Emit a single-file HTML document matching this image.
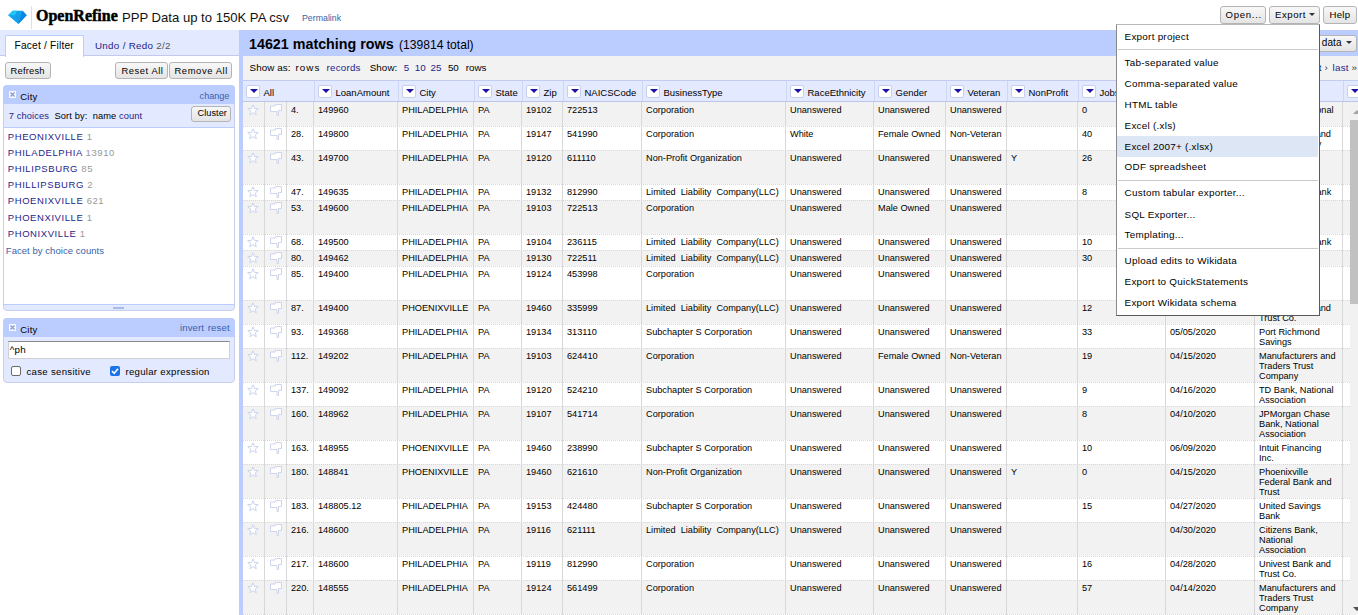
<!DOCTYPE html>
<html><head><meta charset="utf-8"><title>OpenRefine</title>
<style>
*{box-sizing:border-box;margin:0;padding:0}
html,body{width:1358px;height:615px;overflow:hidden;background:#fff;font-family:"Liberation Sans",sans-serif;color:#000;position:relative}
.a{-webkit-text-stroke:0px currentColor}
.a{position:absolute;white-space:nowrap}
.btn{position:absolute;border:1px solid #b4b4b4;border-radius:3px;background:linear-gradient(#f8f8f8,#e4e4e4)}
.vl{position:absolute;width:1px;background:#d8d8d8}
.dd{position:absolute;width:14px;height:13px;background:#fff;border:1px solid #c8cfee;border-radius:2px}
.dd:after{content:"";position:absolute;left:2.5px;top:3px;border-left:4px solid transparent;border-right:4px solid transparent;border-top:4.5px solid #1c12a0}
.arr{position:absolute;border-left:3px solid transparent;border-right:3px solid transparent;border-top:3.5px solid #333}
</style></head><body>

<svg class="a" style="left:8px;top:10px" width="20" height="15" viewBox="0 0 20 15">
<polygon points="4.6,0.8 14.6,0.8 18.7,5.3 10.3,13.9 0.1,5.3" fill="#12a2ee"/>
<polygon points="4.6,0.8 9,0.8 7,5.3 0.1,5.3" fill="#22c6f6"/>
<polygon points="14.6,0.8 18.7,5.3 10.3,13.9 13,5.3" fill="#0b86e2"/>
<polygon points="7,5.3 13,5.3 10.3,13.9" fill="#139cec"/>
</svg>
<div class="a" style="left:31px;top:6px;width:1px;height:23px;background:#dcdcea"></div>
<div class="a" style="left:36px;top:5.10px;font-size:16px;line-height:21px;font-family:'Liberation Serif',serif;font-weight:bold;letter-spacing:0px;-webkit-text-stroke:0.45px #000">OpenRefine</div>
<div class="a" style="left:122px;top:8.96px;font-size:13.1px;line-height:17px;color:#111">PPP Data up to 150K PA csv</div>
<div class="a" style="left:302px;top:12.95px;font-size:8.8px;line-height:11px;color:#3a5fa8">Permalink</div>
<div class="btn" style="left:1220px;top:6px;width:46px;height:18px"></div>
<div class="a" style="left:1225.5px;top:8.67px;font-size:9.6px;line-height:12px;letter-spacing:0.7px">Open...</div>
<div class="btn" style="left:1269px;top:6px;width:51px;height:18px"></div>
<div class="a" style="left:1275px;top:8.67px;font-size:9.6px;line-height:12px;letter-spacing:0.55px">Export</div>
<div class="arr" style="left:1309px;top:13px"></div>
<div class="btn" style="left:1323px;top:6px;width:34px;height:18px"></div>
<div class="a" style="left:1329.5px;top:8.67px;font-size:9.6px;line-height:12px;letter-spacing:0.3px">Help</div>
<div class="a" style="left:0;top:30px;width:239px;height:26px;background:#e3e9ff;border-bottom:1px solid #c3c9ea"></div>
<div class="a" style="left:5px;top:35px;width:79px;height:22px;background:#fff;border:1px solid #bbccff;border-bottom:none;border-radius:2px 2px 0 0"></div>
<div class="a" style="left:14.5px;top:38.77px;font-size:10.2px;line-height:13px;letter-spacing:0.2px">Facet / Filter</div>
<div class="a" style="left:95px;top:38.70px;font-size:9.8px;line-height:13px;color:#1e1e8a;letter-spacing:0.3px">Undo / Redo <span style="color:#555">2/2</span></div>
<div class="btn" style="left:5px;top:62px;width:46px;height:17px"></div>
<div class="a" style="left:10.5px;top:64.94px;font-size:9.4px;line-height:12px;letter-spacing:0.2px">Refresh</div>
<div class="btn" style="left:115px;top:62px;width:53px;height:17px"></div>
<div class="a" style="left:121.5px;top:64.94px;font-size:9.4px;line-height:12px;letter-spacing:0.55px">Reset All</div>
<div class="btn" style="left:169px;top:62px;width:63px;height:17px"></div>
<div class="a" style="left:174.5px;top:64.94px;font-size:9.4px;line-height:12px;letter-spacing:0.6px">Remove All</div>
<div class="a" style="left:3px;top:85px;width:232px;height:226px;background:#e3e9ff;border-radius:4px;border:1px solid #c6cfee"></div>
<div class="a" style="left:3px;top:85px;width:232px;height:19px;background:#bbccff;border-radius:4px 4px 0 0"></div>
<div class="a" style="left:4px;top:127px;width:230px;height:178px;background:#fff;border-top:1px solid #bbccff;border-bottom:1px solid #bbccff"></div>
<svg class="a" style="left:9px;top:91px" width="7" height="7" viewBox="0 0 7 7"><rect width="7" height="7" fill="#fff" opacity="0.85"/><path d="M1.5 1.5 L5.5 5.5 M5.5 1.5 L1.5 5.5" stroke="#8b9bd2" stroke-width="1.3"/></svg>
<div class="a" style="left:20.2px;top:90.91px;font-size:9.5px;line-height:12px;letter-spacing:0.25px">City</div>
<div class="a" style="left:199.6px;top:90.05px;font-size:9.1px;line-height:12px;color:#3a5fa8">change</div>
<div class="a" style="left:8.8px;top:109.68px;font-size:9.3px;line-height:12px;color:#1e1e8a;letter-spacing:0.1px">7 choices</div>
<div class="a" style="left:54.5px;top:109.68px;font-size:9.3px;line-height:12px;letter-spacing:0.1px">Sort by: &nbsp;name <span style="color:#1e1e8a">count</span></div>
<div class="btn" style="left:191px;top:106px;width:40px;height:16px"></div>
<div class="a" style="left:197.5px;top:107.01px;font-size:9.2px;line-height:12px;letter-spacing:0.05px">Cluster</div>
<div class="a" style="left:7.8px;top:131.11px;font-size:9.5px;line-height:12px;color:#1e1e8a;letter-spacing:0.58px">PHEONIXVILLE <span style="color:#999">1</span></div>
<div class="a" style="left:7.8px;top:147.21px;font-size:9.5px;line-height:12px;color:#1e1e8a;letter-spacing:0.58px">PHILADELPHIA <span style="color:#999">13910</span></div>
<div class="a" style="left:7.8px;top:163.21px;font-size:9.5px;line-height:12px;color:#1e1e8a;letter-spacing:0.58px">PHILIPSBURG <span style="color:#999">85</span></div>
<div class="a" style="left:7.8px;top:179.31px;font-size:9.5px;line-height:12px;color:#1e1e8a;letter-spacing:0.58px">PHILLIPSBURG <span style="color:#999">2</span></div>
<div class="a" style="left:7.8px;top:195.41px;font-size:9.5px;line-height:12px;color:#1e1e8a;letter-spacing:0.58px">PHOENIXVILLE <span style="color:#999">621</span></div>
<div class="a" style="left:7.8px;top:211.51px;font-size:9.5px;line-height:12px;color:#1e1e8a;letter-spacing:0.58px">PHOENXIVILLE <span style="color:#999">1</span></div>
<div class="a" style="left:7.8px;top:227.51px;font-size:9.5px;line-height:12px;color:#1e1e8a;letter-spacing:0.58px">PHONIXVILLE <span style="color:#999">1</span></div>
<div class="a" style="left:5.8px;top:245.31px;font-size:9.5px;line-height:12px;color:#3a5fa8;letter-spacing:0.05px">Facet by choice counts</div>
<div class="a" style="left:113px;top:307px;width:11px;height:2px;background:#a9b9ea"></div>
<div class="a" style="left:3px;top:318px;width:232px;height:65px;background:#e3e9ff;border-radius:4px;border:1px solid #c6cfee"></div>
<div class="a" style="left:3px;top:318px;width:232px;height:19px;background:#bbccff;border-radius:4px 4px 0 0"></div>
<svg class="a" style="left:9px;top:324px" width="7" height="7" viewBox="0 0 7 7"><rect width="7" height="7" fill="#fff" opacity="0.85"/><path d="M1.5 1.5 L5.5 5.5 M5.5 1.5 L1.5 5.5" stroke="#8b9bd2" stroke-width="1.3"/></svg>
<div class="a" style="left:20.2px;top:323.91px;font-size:9.5px;line-height:12px;letter-spacing:0.25px">City</div>
<div class="a" style="left:180px;top:322.17px;font-size:9.6px;line-height:12px;color:#3a5fa8;letter-spacing:0.1px">invert <span style="margin-left:1px">reset</span></div>
<div class="a" style="left:8px;top:341px;width:222px;height:18px;background:#fff;border:1px solid #d0d0d0;border-top-color:#8a8a8a"></div>
<div class="a" style="left:9.7px;top:342.80px;font-size:9.8px;line-height:13px;letter-spacing:0.3px">^ph</div>
<div class="a" style="left:11px;top:366px;width:10px;height:10px;background:#fff;border:1px solid #6a6a6a;border-radius:2px"></div>
<div class="a" style="left:26.5px;top:366.37px;font-size:9.6px;line-height:12px;letter-spacing:0.3px">case sensitive</div>
<svg class="a" style="left:110px;top:366px" width="10" height="10" viewBox="0 0 10 10"><rect x="0" y="0" width="10" height="10" rx="2" fill="#1a73e8"/><path d="M2 5.2 L4.2 7.3 L8 2.8" stroke="#fff" stroke-width="1.6" fill="none"/></svg>
<div class="a" style="left:125.4px;top:366.37px;font-size:9.6px;line-height:12px;letter-spacing:0.3px">regular expression</div>
<div class="a" style="left:239px;top:30px;width:1119px;height:585px;background:#bbccff"></div>
<div class="a" style="left:243px;top:56px;width:1115px;height:24px;background:#f2f2f2"></div>
<div class="a" style="left:249px;top:34.55px;font-size:14.3px;line-height:19px;font-weight:bold">14621 matching rows</div>
<div class="a" style="left:399px;top:36.81px;font-size:12.1px;line-height:16px;">(139814 total)</div>
<div class="a" style="left:249.6px;top:60.80px;font-size:9.8px;line-height:13px;letter-spacing:0.1px">Show as:</div>
<div class="a" style="left:295.6px;top:60.80px;font-size:9.8px;line-height:13px;letter-spacing:1.0px">rows</div>
<div class="a" style="left:326.6px;top:60.80px;font-size:9.8px;line-height:13px;color:#1e1e8a;letter-spacing:0.2px">records</div>
<div class="a" style="left:369.7px;top:60.80px;font-size:9.8px;line-height:13px;letter-spacing:0.1px">Show:</div>
<div class="a" style="left:403.8px;top:60.80px;font-size:9.8px;line-height:13px;color:#1e1e8a">5</div>
<div class="a" style="left:414.7px;top:60.80px;font-size:9.8px;line-height:13px;color:#1e1e8a">10</div>
<div class="a" style="left:430.6px;top:60.80px;font-size:9.8px;line-height:13px;color:#1e1e8a">25</div>
<div class="a" style="left:447.9px;top:60.80px;font-size:9.8px;line-height:13px;">50</div>
<div class="a" style="left:465.7px;top:60.80px;font-size:9.8px;line-height:13px;letter-spacing:0px">rows</div>
<div class="a" style="left:1302px;top:60.90px;font-size:9.8px;line-height:13px;color:#1e1e8a;letter-spacing:0.3px">next</div>
<div class="a" style="left:1324.5px;top:60.90px;font-size:9.8px;line-height:13px;color:#333">›</div>
<div class="a" style="left:1332.6px;top:60.90px;font-size:9.8px;line-height:13px;color:#1e1e8a;letter-spacing:0.25px">last</div>
<div class="a" style="left:1351.5px;top:60.90px;font-size:9.8px;line-height:13px;color:#333">»</div>
<div class="btn" style="left:1270px;top:35px;width:87px;height:17px"></div>
<div class="a" style="left:1321.8px;top:35.83px;font-size:10px;line-height:13px;letter-spacing:0.1px">data</div>
<div class="arr" style="left:1346px;top:41px"></div>
<div class="a" style="left:243px;top:80px;width:1115px;height:22px;background:#e3e9ff;border-top:1px solid #c2ccef;border-bottom:1px solid #bcc6ea"></div>
<div class="dd" style="left:246px;top:85px"></div>
<div class="a" style="left:263.5px;top:86.91px;font-size:9.5px;line-height:12px;letter-spacing:0px">All</div>
<div class="a" style="left:314px;top:81px;width:1px;height:20px;background:#cdd6f6"></div>
<div class="dd" style="left:318px;top:85px"></div>
<div class="a" style="left:335.5px;top:86.91px;font-size:9.5px;line-height:12px;letter-spacing:0px">LoanAmount</div>
<div class="a" style="left:398px;top:81px;width:1px;height:20px;background:#cdd6f6"></div>
<div class="dd" style="left:402px;top:85px"></div>
<div class="a" style="left:419.5px;top:86.91px;font-size:9.5px;line-height:12px;letter-spacing:0px">City</div>
<div class="a" style="left:474px;top:81px;width:1px;height:20px;background:#cdd6f6"></div>
<div class="dd" style="left:478px;top:85px"></div>
<div class="a" style="left:495.5px;top:86.91px;font-size:9.5px;line-height:12px;letter-spacing:0px">State</div>
<div class="a" style="left:522px;top:81px;width:1px;height:20px;background:#cdd6f6"></div>
<div class="dd" style="left:526px;top:85px"></div>
<div class="a" style="left:543.5px;top:86.91px;font-size:9.5px;line-height:12px;letter-spacing:0px">Zip</div>
<div class="a" style="left:563px;top:81px;width:1px;height:20px;background:#cdd6f6"></div>
<div class="dd" style="left:567px;top:85px"></div>
<div class="a" style="left:584.5px;top:86.91px;font-size:9.5px;line-height:12px;letter-spacing:0px">NAICSCode</div>
<div class="a" style="left:642px;top:81px;width:1px;height:20px;background:#cdd6f6"></div>
<div class="dd" style="left:646px;top:85px"></div>
<div class="a" style="left:663.5px;top:86.91px;font-size:9.5px;line-height:12px;letter-spacing:0px">BusinessType</div>
<div class="a" style="left:786px;top:81px;width:1px;height:20px;background:#cdd6f6"></div>
<div class="dd" style="left:790px;top:85px"></div>
<div class="a" style="left:807.5px;top:86.91px;font-size:9.5px;line-height:12px;letter-spacing:0px">RaceEthnicity</div>
<div class="a" style="left:874px;top:81px;width:1px;height:20px;background:#cdd6f6"></div>
<div class="dd" style="left:878px;top:85px"></div>
<div class="a" style="left:895.5px;top:86.91px;font-size:9.5px;line-height:12px;letter-spacing:0px">Gender</div>
<div class="a" style="left:946px;top:81px;width:1px;height:20px;background:#cdd6f6"></div>
<div class="dd" style="left:950px;top:85px"></div>
<div class="a" style="left:967.5px;top:86.91px;font-size:9.5px;line-height:12px;letter-spacing:0px">Veteran</div>
<div class="a" style="left:1007px;top:81px;width:1px;height:20px;background:#cdd6f6"></div>
<div class="dd" style="left:1011px;top:85px"></div>
<div class="a" style="left:1028.5px;top:86.91px;font-size:9.5px;line-height:12px;letter-spacing:0px">NonProfit</div>
<div class="a" style="left:1078px;top:81px;width:1px;height:20px;background:#cdd6f6"></div>
<div class="dd" style="left:1082px;top:85px"></div>
<div class="a" style="left:1099.5px;top:86.91px;font-size:9.5px;line-height:12px;letter-spacing:0px">JobsRetained</div>
<div class="a" style="left:1166px;top:81px;width:1px;height:20px;background:#cdd6f6"></div>
<div class="dd" style="left:1170px;top:85px"></div>
<div class="a" style="left:1187.5px;top:86.91px;font-size:9.5px;line-height:12px;letter-spacing:0px">DateApproved</div>
<div class="a" style="left:1255px;top:81px;width:1px;height:20px;background:#cdd6f6"></div>
<div class="dd" style="left:1259px;top:85px"></div>
<div class="a" style="left:1276.5px;top:86.91px;font-size:9.5px;line-height:12px;letter-spacing:0px">Lender</div>
<div class="a" style="left:1343px;top:81px;width:1px;height:20px;background:#cdd6f6"></div>
<div class="dd" style="left:1347px;top:85px"></div>
<div class="a" style="left:1364.5px;top:86.91px;font-size:9.5px;line-height:12px;letter-spacing:0px">CD</div>
<div class="a" style="left:243px;top:102px;width:1107px;height:24px;background:#f2f2f2"></div>
<svg class="a" style="left:247px;top:104px" width="12" height="12" viewBox="0 0 12 12"><polygon points="6,0.8 7.5,4.4 11.3,4.6 8.3,7 9.3,10.8 6,8.7 2.7,10.8 3.7,7 0.7,4.6 4.5,4.4" fill="#fff" stroke="#cbd5ee" stroke-width="1"/></svg>
<svg class="a" style="left:269px;top:104px" width="14" height="13" viewBox="0 0 14 13"><path d="M1.5 2 L6 2 L6.5 0.5 L12.5 0.5 L12.5 6.5 L9.5 6.5 L9.5 11.5 L8 11.5 L8 7.5 L1.5 7.5 Z" fill="#fff" stroke="#cbd3ec" stroke-width="0.95"/></svg>
<div class="a" style="left:290.6px;top:105.07px;font-size:9.9px;line-height:10px;transform:scaleX(0.93);transform-origin:0 0">4.</div>
<div class="a" style="left:317.6px;top:105.07px;font-size:9.9px;line-height:10px;transform:scaleX(0.93);transform-origin:0 0">149960</div>
<div class="a" style="left:401.6px;top:105.07px;font-size:9.9px;line-height:10px;transform:scaleX(0.93);transform-origin:0 0">PHILADELPHIA</div>
<div class="a" style="left:477.6px;top:105.07px;font-size:9.9px;line-height:10px;transform:scaleX(0.93);transform-origin:0 0">PA</div>
<div class="a" style="left:525.6px;top:105.07px;font-size:9.9px;line-height:10px;transform:scaleX(0.93);transform-origin:0 0">19102</div>
<div class="a" style="left:566.6px;top:105.07px;font-size:9.9px;line-height:10px;transform:scaleX(0.93);transform-origin:0 0">722513</div>
<div class="a" style="left:645.6px;top:105.07px;font-size:9.9px;line-height:10px;transform:scaleX(0.93);transform-origin:0 0">Corporation</div>
<div class="a" style="left:789.6px;top:105.07px;font-size:9.9px;line-height:10px;transform:scaleX(0.93);transform-origin:0 0">Unanswered</div>
<div class="a" style="left:877.6px;top:105.07px;font-size:9.9px;line-height:10px;transform:scaleX(0.93);transform-origin:0 0">Unanswered</div>
<div class="a" style="left:949.6px;top:105.07px;font-size:9.9px;line-height:10px;transform:scaleX(0.93);transform-origin:0 0">Unanswered</div>
<div class="a" style="left:1081.6px;top:105.07px;font-size:9.9px;line-height:10px;transform:scaleX(0.93);transform-origin:0 0">0</div>
<div class="a" style="left:1169.6px;top:105.07px;font-size:9.9px;line-height:10px;transform:scaleX(0.93);transform-origin:0 0">04/28/2020</div>
<div class="a" style="left:1258.8px;top:105.07px;font-size:9.9px;line-height:10px;transform:scaleX(0.93);transform-origin:0 0">TD Bank, National</div>
<div class="a" style="left:1258.8px;top:115.07px;font-size:9.9px;line-height:10px;transform:scaleX(0.93);transform-origin:0 0">Association</div>
<div class="a" style="left:243px;top:126px;width:1107px;height:24px;background:#fff"></div>
<div class="a" style="left:243px;top:126px;width:1107px;height:0;border-top:1px dotted #d9d9d9"></div>
<svg class="a" style="left:247px;top:128px" width="12" height="12" viewBox="0 0 12 12"><polygon points="6,0.8 7.5,4.4 11.3,4.6 8.3,7 9.3,10.8 6,8.7 2.7,10.8 3.7,7 0.7,4.6 4.5,4.4" fill="#fff" stroke="#cbd5ee" stroke-width="1"/></svg>
<svg class="a" style="left:269px;top:128px" width="14" height="13" viewBox="0 0 14 13"><path d="M1.5 2 L6 2 L6.5 0.5 L12.5 0.5 L12.5 6.5 L9.5 6.5 L9.5 11.5 L8 11.5 L8 7.5 L1.5 7.5 Z" fill="#fff" stroke="#cbd3ec" stroke-width="0.95"/></svg>
<div class="a" style="left:290.6px;top:129.07px;font-size:9.9px;line-height:10px;transform:scaleX(0.93);transform-origin:0 0">28.</div>
<div class="a" style="left:317.6px;top:129.07px;font-size:9.9px;line-height:10px;transform:scaleX(0.93);transform-origin:0 0">149800</div>
<div class="a" style="left:401.6px;top:129.07px;font-size:9.9px;line-height:10px;transform:scaleX(0.93);transform-origin:0 0">PHILADELPHIA</div>
<div class="a" style="left:477.6px;top:129.07px;font-size:9.9px;line-height:10px;transform:scaleX(0.93);transform-origin:0 0">PA</div>
<div class="a" style="left:525.6px;top:129.07px;font-size:9.9px;line-height:10px;transform:scaleX(0.93);transform-origin:0 0">19147</div>
<div class="a" style="left:566.6px;top:129.07px;font-size:9.9px;line-height:10px;transform:scaleX(0.93);transform-origin:0 0">541990</div>
<div class="a" style="left:645.6px;top:129.07px;font-size:9.9px;line-height:10px;transform:scaleX(0.93);transform-origin:0 0">Corporation</div>
<div class="a" style="left:789.6px;top:129.07px;font-size:9.9px;line-height:10px;transform:scaleX(0.93);transform-origin:0 0">White</div>
<div class="a" style="left:877.6px;top:129.07px;font-size:9.9px;line-height:10px;transform:scaleX(0.93);transform-origin:0 0">Female Owned</div>
<div class="a" style="left:949.6px;top:129.07px;font-size:9.9px;line-height:10px;transform:scaleX(0.93);transform-origin:0 0">Non-Veteran</div>
<div class="a" style="left:1081.6px;top:129.07px;font-size:9.9px;line-height:10px;transform:scaleX(0.93);transform-origin:0 0">40</div>
<div class="a" style="left:1169.6px;top:129.07px;font-size:9.9px;line-height:10px;transform:scaleX(0.93);transform-origin:0 0">04/06/2020</div>
<div class="a" style="left:1258.8px;top:129.07px;font-size:9.9px;line-height:10px;transform:scaleX(0.93);transform-origin:0 0">Univest Bank and</div>
<div class="a" style="left:1258.8px;top:139.07px;font-size:9.9px;line-height:10px;transform:scaleX(0.93);transform-origin:0 0">Trust Company</div>
<div class="a" style="left:243px;top:150px;width:1107px;height:34px;background:#f2f2f2"></div>
<div class="a" style="left:243px;top:150px;width:1107px;height:0;border-top:1px dotted #d9d9d9"></div>
<svg class="a" style="left:247px;top:152px" width="12" height="12" viewBox="0 0 12 12"><polygon points="6,0.8 7.5,4.4 11.3,4.6 8.3,7 9.3,10.8 6,8.7 2.7,10.8 3.7,7 0.7,4.6 4.5,4.4" fill="#fff" stroke="#cbd5ee" stroke-width="1"/></svg>
<svg class="a" style="left:269px;top:152px" width="14" height="13" viewBox="0 0 14 13"><path d="M1.5 2 L6 2 L6.5 0.5 L12.5 0.5 L12.5 6.5 L9.5 6.5 L9.5 11.5 L8 11.5 L8 7.5 L1.5 7.5 Z" fill="#fff" stroke="#cbd3ec" stroke-width="0.95"/></svg>
<div class="a" style="left:290.6px;top:153.07px;font-size:9.9px;line-height:10px;transform:scaleX(0.93);transform-origin:0 0">43.</div>
<div class="a" style="left:317.6px;top:153.07px;font-size:9.9px;line-height:10px;transform:scaleX(0.93);transform-origin:0 0">149700</div>
<div class="a" style="left:401.6px;top:153.07px;font-size:9.9px;line-height:10px;transform:scaleX(0.93);transform-origin:0 0">PHILADELPHIA</div>
<div class="a" style="left:477.6px;top:153.07px;font-size:9.9px;line-height:10px;transform:scaleX(0.93);transform-origin:0 0">PA</div>
<div class="a" style="left:525.6px;top:153.07px;font-size:9.9px;line-height:10px;transform:scaleX(0.93);transform-origin:0 0">19120</div>
<div class="a" style="left:566.6px;top:153.07px;font-size:9.9px;line-height:10px;transform:scaleX(0.93);transform-origin:0 0">611110</div>
<div class="a" style="left:645.6px;top:153.07px;font-size:9.9px;line-height:10px;transform:scaleX(0.93);transform-origin:0 0">Non-Profit Organization</div>
<div class="a" style="left:789.6px;top:153.07px;font-size:9.9px;line-height:10px;transform:scaleX(0.93);transform-origin:0 0">Unanswered</div>
<div class="a" style="left:877.6px;top:153.07px;font-size:9.9px;line-height:10px;transform:scaleX(0.93);transform-origin:0 0">Unanswered</div>
<div class="a" style="left:949.6px;top:153.07px;font-size:9.9px;line-height:10px;transform:scaleX(0.93);transform-origin:0 0">Unanswered</div>
<div class="a" style="left:1010.6px;top:153.07px;font-size:9.9px;line-height:10px;transform:scaleX(0.93);transform-origin:0 0">Y</div>
<div class="a" style="left:1081.6px;top:153.07px;font-size:9.9px;line-height:10px;transform:scaleX(0.93);transform-origin:0 0">26</div>
<div class="a" style="left:1169.6px;top:153.07px;font-size:9.9px;line-height:10px;transform:scaleX(0.93);transform-origin:0 0">04/15/2020</div>
<div class="a" style="left:1258.8px;top:153.07px;font-size:9.9px;line-height:10px;transform:scaleX(0.93);transform-origin:0 0">Customers</div>
<div class="a" style="left:1258.8px;top:163.07px;font-size:9.9px;line-height:10px;transform:scaleX(0.93);transform-origin:0 0">Bank</div>
<div class="a" style="left:1258.8px;top:173.07px;font-size:9.9px;line-height:10px;transform:scaleX(0.93);transform-origin:0 0">Association</div>
<div class="a" style="left:243px;top:184px;width:1107px;height:16px;background:#fff"></div>
<div class="a" style="left:243px;top:184px;width:1107px;height:0;border-top:1px dotted #d9d9d9"></div>
<svg class="a" style="left:247px;top:186px" width="12" height="12" viewBox="0 0 12 12"><polygon points="6,0.8 7.5,4.4 11.3,4.6 8.3,7 9.3,10.8 6,8.7 2.7,10.8 3.7,7 0.7,4.6 4.5,4.4" fill="#fff" stroke="#cbd5ee" stroke-width="1"/></svg>
<svg class="a" style="left:269px;top:186px" width="14" height="13" viewBox="0 0 14 13"><path d="M1.5 2 L6 2 L6.5 0.5 L12.5 0.5 L12.5 6.5 L9.5 6.5 L9.5 11.5 L8 11.5 L8 7.5 L1.5 7.5 Z" fill="#fff" stroke="#cbd3ec" stroke-width="0.95"/></svg>
<div class="a" style="left:290.6px;top:187.07px;font-size:9.9px;line-height:10px;transform:scaleX(0.93);transform-origin:0 0">47.</div>
<div class="a" style="left:317.6px;top:187.07px;font-size:9.9px;line-height:10px;transform:scaleX(0.93);transform-origin:0 0">149635</div>
<div class="a" style="left:401.6px;top:187.07px;font-size:9.9px;line-height:10px;transform:scaleX(0.93);transform-origin:0 0">PHILADELPHIA</div>
<div class="a" style="left:477.6px;top:187.07px;font-size:9.9px;line-height:10px;transform:scaleX(0.93);transform-origin:0 0">PA</div>
<div class="a" style="left:525.6px;top:187.07px;font-size:9.9px;line-height:10px;transform:scaleX(0.93);transform-origin:0 0">19132</div>
<div class="a" style="left:566.6px;top:187.07px;font-size:9.9px;line-height:10px;transform:scaleX(0.93);transform-origin:0 0">812990</div>
<div class="a" style="left:645.6px;top:187.07px;font-size:9.9px;line-height:10px;transform:scaleX(0.93);transform-origin:0 0">Limited&nbsp; Liability&nbsp; Company(LLC)</div>
<div class="a" style="left:789.6px;top:187.07px;font-size:9.9px;line-height:10px;transform:scaleX(0.93);transform-origin:0 0">Unanswered</div>
<div class="a" style="left:877.6px;top:187.07px;font-size:9.9px;line-height:10px;transform:scaleX(0.93);transform-origin:0 0">Unanswered</div>
<div class="a" style="left:949.6px;top:187.07px;font-size:9.9px;line-height:10px;transform:scaleX(0.93);transform-origin:0 0">Unanswered</div>
<div class="a" style="left:1081.6px;top:187.07px;font-size:9.9px;line-height:10px;transform:scaleX(0.93);transform-origin:0 0">8</div>
<div class="a" style="left:1169.6px;top:187.07px;font-size:9.9px;line-height:10px;transform:scaleX(0.93);transform-origin:0 0">04/30/2020</div>
<div class="a" style="left:1258.8px;top:187.07px;font-size:9.9px;line-height:10px;transform:scaleX(0.93);transform-origin:0 0">Wells Fargo Bank</div>
<div class="a" style="left:243px;top:200px;width:1107px;height:34px;background:#f2f2f2"></div>
<div class="a" style="left:243px;top:200px;width:1107px;height:0;border-top:1px dotted #d9d9d9"></div>
<svg class="a" style="left:247px;top:202px" width="12" height="12" viewBox="0 0 12 12"><polygon points="6,0.8 7.5,4.4 11.3,4.6 8.3,7 9.3,10.8 6,8.7 2.7,10.8 3.7,7 0.7,4.6 4.5,4.4" fill="#fff" stroke="#cbd5ee" stroke-width="1"/></svg>
<svg class="a" style="left:269px;top:202px" width="14" height="13" viewBox="0 0 14 13"><path d="M1.5 2 L6 2 L6.5 0.5 L12.5 0.5 L12.5 6.5 L9.5 6.5 L9.5 11.5 L8 11.5 L8 7.5 L1.5 7.5 Z" fill="#fff" stroke="#cbd3ec" stroke-width="0.95"/></svg>
<div class="a" style="left:290.6px;top:203.07px;font-size:9.9px;line-height:10px;transform:scaleX(0.93);transform-origin:0 0">53.</div>
<div class="a" style="left:317.6px;top:203.07px;font-size:9.9px;line-height:10px;transform:scaleX(0.93);transform-origin:0 0">149600</div>
<div class="a" style="left:401.6px;top:203.07px;font-size:9.9px;line-height:10px;transform:scaleX(0.93);transform-origin:0 0">PHILADELPHIA</div>
<div class="a" style="left:477.6px;top:203.07px;font-size:9.9px;line-height:10px;transform:scaleX(0.93);transform-origin:0 0">PA</div>
<div class="a" style="left:525.6px;top:203.07px;font-size:9.9px;line-height:10px;transform:scaleX(0.93);transform-origin:0 0">19103</div>
<div class="a" style="left:566.6px;top:203.07px;font-size:9.9px;line-height:10px;transform:scaleX(0.93);transform-origin:0 0">722513</div>
<div class="a" style="left:645.6px;top:203.07px;font-size:9.9px;line-height:10px;transform:scaleX(0.93);transform-origin:0 0">Corporation</div>
<div class="a" style="left:789.6px;top:203.07px;font-size:9.9px;line-height:10px;transform:scaleX(0.93);transform-origin:0 0">Unanswered</div>
<div class="a" style="left:877.6px;top:203.07px;font-size:9.9px;line-height:10px;transform:scaleX(0.93);transform-origin:0 0">Male Owned</div>
<div class="a" style="left:949.6px;top:203.07px;font-size:9.9px;line-height:10px;transform:scaleX(0.93);transform-origin:0 0">Unanswered</div>
<div class="a" style="left:1169.6px;top:203.07px;font-size:9.9px;line-height:10px;transform:scaleX(0.93);transform-origin:0 0">04/14/2020</div>
<div class="a" style="left:1258.8px;top:203.07px;font-size:9.9px;line-height:10px;transform:scaleX(0.93);transform-origin:0 0">Customers</div>
<div class="a" style="left:1258.8px;top:213.07px;font-size:9.9px;line-height:10px;transform:scaleX(0.93);transform-origin:0 0">Bank</div>
<div class="a" style="left:1258.8px;top:223.07px;font-size:9.9px;line-height:10px;transform:scaleX(0.93);transform-origin:0 0">Association</div>
<div class="a" style="left:243px;top:234px;width:1107px;height:16px;background:#fff"></div>
<div class="a" style="left:243px;top:234px;width:1107px;height:0;border-top:1px dotted #d9d9d9"></div>
<svg class="a" style="left:247px;top:236px" width="12" height="12" viewBox="0 0 12 12"><polygon points="6,0.8 7.5,4.4 11.3,4.6 8.3,7 9.3,10.8 6,8.7 2.7,10.8 3.7,7 0.7,4.6 4.5,4.4" fill="#fff" stroke="#cbd5ee" stroke-width="1"/></svg>
<svg class="a" style="left:269px;top:236px" width="14" height="13" viewBox="0 0 14 13"><path d="M1.5 2 L6 2 L6.5 0.5 L12.5 0.5 L12.5 6.5 L9.5 6.5 L9.5 11.5 L8 11.5 L8 7.5 L1.5 7.5 Z" fill="#fff" stroke="#cbd3ec" stroke-width="0.95"/></svg>
<div class="a" style="left:290.6px;top:237.07px;font-size:9.9px;line-height:10px;transform:scaleX(0.93);transform-origin:0 0">68.</div>
<div class="a" style="left:317.6px;top:237.07px;font-size:9.9px;line-height:10px;transform:scaleX(0.93);transform-origin:0 0">149500</div>
<div class="a" style="left:401.6px;top:237.07px;font-size:9.9px;line-height:10px;transform:scaleX(0.93);transform-origin:0 0">PHILADELPHIA</div>
<div class="a" style="left:477.6px;top:237.07px;font-size:9.9px;line-height:10px;transform:scaleX(0.93);transform-origin:0 0">PA</div>
<div class="a" style="left:525.6px;top:237.07px;font-size:9.9px;line-height:10px;transform:scaleX(0.93);transform-origin:0 0">19104</div>
<div class="a" style="left:566.6px;top:237.07px;font-size:9.9px;line-height:10px;transform:scaleX(0.93);transform-origin:0 0">236115</div>
<div class="a" style="left:645.6px;top:237.07px;font-size:9.9px;line-height:10px;transform:scaleX(0.93);transform-origin:0 0">Limited&nbsp; Liability&nbsp; Company(LLC)</div>
<div class="a" style="left:789.6px;top:237.07px;font-size:9.9px;line-height:10px;transform:scaleX(0.93);transform-origin:0 0">Unanswered</div>
<div class="a" style="left:877.6px;top:237.07px;font-size:9.9px;line-height:10px;transform:scaleX(0.93);transform-origin:0 0">Unanswered</div>
<div class="a" style="left:949.6px;top:237.07px;font-size:9.9px;line-height:10px;transform:scaleX(0.93);transform-origin:0 0">Unanswered</div>
<div class="a" style="left:1081.6px;top:237.07px;font-size:9.9px;line-height:10px;transform:scaleX(0.93);transform-origin:0 0">10</div>
<div class="a" style="left:1169.6px;top:237.07px;font-size:9.9px;line-height:10px;transform:scaleX(0.93);transform-origin:0 0">04/29/2020</div>
<div class="a" style="left:1258.8px;top:237.07px;font-size:9.9px;line-height:10px;transform:scaleX(0.93);transform-origin:0 0">Wells Fargo Bank</div>
<div class="a" style="left:243px;top:250px;width:1107px;height:16px;background:#f2f2f2"></div>
<div class="a" style="left:243px;top:250px;width:1107px;height:0;border-top:1px dotted #d9d9d9"></div>
<svg class="a" style="left:247px;top:252px" width="12" height="12" viewBox="0 0 12 12"><polygon points="6,0.8 7.5,4.4 11.3,4.6 8.3,7 9.3,10.8 6,8.7 2.7,10.8 3.7,7 0.7,4.6 4.5,4.4" fill="#fff" stroke="#cbd5ee" stroke-width="1"/></svg>
<svg class="a" style="left:269px;top:252px" width="14" height="13" viewBox="0 0 14 13"><path d="M1.5 2 L6 2 L6.5 0.5 L12.5 0.5 L12.5 6.5 L9.5 6.5 L9.5 11.5 L8 11.5 L8 7.5 L1.5 7.5 Z" fill="#fff" stroke="#cbd3ec" stroke-width="0.95"/></svg>
<div class="a" style="left:290.6px;top:253.07px;font-size:9.9px;line-height:10px;transform:scaleX(0.93);transform-origin:0 0">80.</div>
<div class="a" style="left:317.6px;top:253.07px;font-size:9.9px;line-height:10px;transform:scaleX(0.93);transform-origin:0 0">149462</div>
<div class="a" style="left:401.6px;top:253.07px;font-size:9.9px;line-height:10px;transform:scaleX(0.93);transform-origin:0 0">PHILADELPHIA</div>
<div class="a" style="left:477.6px;top:253.07px;font-size:9.9px;line-height:10px;transform:scaleX(0.93);transform-origin:0 0">PA</div>
<div class="a" style="left:525.6px;top:253.07px;font-size:9.9px;line-height:10px;transform:scaleX(0.93);transform-origin:0 0">19130</div>
<div class="a" style="left:566.6px;top:253.07px;font-size:9.9px;line-height:10px;transform:scaleX(0.93);transform-origin:0 0">722511</div>
<div class="a" style="left:645.6px;top:253.07px;font-size:9.9px;line-height:10px;transform:scaleX(0.93);transform-origin:0 0">Limited&nbsp; Liability&nbsp; Company(LLC)</div>
<div class="a" style="left:789.6px;top:253.07px;font-size:9.9px;line-height:10px;transform:scaleX(0.93);transform-origin:0 0">Unanswered</div>
<div class="a" style="left:877.6px;top:253.07px;font-size:9.9px;line-height:10px;transform:scaleX(0.93);transform-origin:0 0">Unanswered</div>
<div class="a" style="left:949.6px;top:253.07px;font-size:9.9px;line-height:10px;transform:scaleX(0.93);transform-origin:0 0">Unanswered</div>
<div class="a" style="left:1081.6px;top:253.07px;font-size:9.9px;line-height:10px;transform:scaleX(0.93);transform-origin:0 0">30</div>
<div class="a" style="left:1169.6px;top:253.07px;font-size:9.9px;line-height:10px;transform:scaleX(0.93);transform-origin:0 0">04/10/2020</div>
<div class="a" style="left:243px;top:266px;width:1107px;height:34px;background:#fff"></div>
<div class="a" style="left:243px;top:266px;width:1107px;height:0;border-top:1px dotted #d9d9d9"></div>
<svg class="a" style="left:247px;top:268px" width="12" height="12" viewBox="0 0 12 12"><polygon points="6,0.8 7.5,4.4 11.3,4.6 8.3,7 9.3,10.8 6,8.7 2.7,10.8 3.7,7 0.7,4.6 4.5,4.4" fill="#fff" stroke="#cbd5ee" stroke-width="1"/></svg>
<svg class="a" style="left:269px;top:268px" width="14" height="13" viewBox="0 0 14 13"><path d="M1.5 2 L6 2 L6.5 0.5 L12.5 0.5 L12.5 6.5 L9.5 6.5 L9.5 11.5 L8 11.5 L8 7.5 L1.5 7.5 Z" fill="#fff" stroke="#cbd3ec" stroke-width="0.95"/></svg>
<div class="a" style="left:290.6px;top:269.07px;font-size:9.9px;line-height:10px;transform:scaleX(0.93);transform-origin:0 0">85.</div>
<div class="a" style="left:317.6px;top:269.07px;font-size:9.9px;line-height:10px;transform:scaleX(0.93);transform-origin:0 0">149400</div>
<div class="a" style="left:401.6px;top:269.07px;font-size:9.9px;line-height:10px;transform:scaleX(0.93);transform-origin:0 0">PHILADELPHIA</div>
<div class="a" style="left:477.6px;top:269.07px;font-size:9.9px;line-height:10px;transform:scaleX(0.93);transform-origin:0 0">PA</div>
<div class="a" style="left:525.6px;top:269.07px;font-size:9.9px;line-height:10px;transform:scaleX(0.93);transform-origin:0 0">19124</div>
<div class="a" style="left:566.6px;top:269.07px;font-size:9.9px;line-height:10px;transform:scaleX(0.93);transform-origin:0 0">453998</div>
<div class="a" style="left:645.6px;top:269.07px;font-size:9.9px;line-height:10px;transform:scaleX(0.93);transform-origin:0 0">Corporation</div>
<div class="a" style="left:789.6px;top:269.07px;font-size:9.9px;line-height:10px;transform:scaleX(0.93);transform-origin:0 0">Unanswered</div>
<div class="a" style="left:877.6px;top:269.07px;font-size:9.9px;line-height:10px;transform:scaleX(0.93);transform-origin:0 0">Unanswered</div>
<div class="a" style="left:949.6px;top:269.07px;font-size:9.9px;line-height:10px;transform:scaleX(0.93);transform-origin:0 0">Unanswered</div>
<div class="a" style="left:1169.6px;top:269.07px;font-size:9.9px;line-height:10px;transform:scaleX(0.93);transform-origin:0 0">04/15/2020</div>
<div class="a" style="left:1258.8px;top:269.07px;font-size:9.9px;line-height:10px;transform:scaleX(0.93);transform-origin:0 0">Customers</div>
<div class="a" style="left:1258.8px;top:279.07px;font-size:9.9px;line-height:10px;transform:scaleX(0.93);transform-origin:0 0">Bank</div>
<div class="a" style="left:1258.8px;top:289.07px;font-size:9.9px;line-height:10px;transform:scaleX(0.93);transform-origin:0 0">Association</div>
<div class="a" style="left:243px;top:300px;width:1107px;height:24px;background:#f2f2f2"></div>
<div class="a" style="left:243px;top:300px;width:1107px;height:0;border-top:1px dotted #d9d9d9"></div>
<svg class="a" style="left:247px;top:302px" width="12" height="12" viewBox="0 0 12 12"><polygon points="6,0.8 7.5,4.4 11.3,4.6 8.3,7 9.3,10.8 6,8.7 2.7,10.8 3.7,7 0.7,4.6 4.5,4.4" fill="#fff" stroke="#cbd5ee" stroke-width="1"/></svg>
<svg class="a" style="left:269px;top:302px" width="14" height="13" viewBox="0 0 14 13"><path d="M1.5 2 L6 2 L6.5 0.5 L12.5 0.5 L12.5 6.5 L9.5 6.5 L9.5 11.5 L8 11.5 L8 7.5 L1.5 7.5 Z" fill="#fff" stroke="#cbd3ec" stroke-width="0.95"/></svg>
<div class="a" style="left:290.6px;top:303.07px;font-size:9.9px;line-height:10px;transform:scaleX(0.93);transform-origin:0 0">87.</div>
<div class="a" style="left:317.6px;top:303.07px;font-size:9.9px;line-height:10px;transform:scaleX(0.93);transform-origin:0 0">149400</div>
<div class="a" style="left:401.6px;top:303.07px;font-size:9.9px;line-height:10px;transform:scaleX(0.93);transform-origin:0 0">PHOENIXVILLE</div>
<div class="a" style="left:477.6px;top:303.07px;font-size:9.9px;line-height:10px;transform:scaleX(0.93);transform-origin:0 0">PA</div>
<div class="a" style="left:525.6px;top:303.07px;font-size:9.9px;line-height:10px;transform:scaleX(0.93);transform-origin:0 0">19460</div>
<div class="a" style="left:566.6px;top:303.07px;font-size:9.9px;line-height:10px;transform:scaleX(0.93);transform-origin:0 0">335999</div>
<div class="a" style="left:645.6px;top:303.07px;font-size:9.9px;line-height:10px;transform:scaleX(0.93);transform-origin:0 0">Limited&nbsp; Liability&nbsp; Company(LLC)</div>
<div class="a" style="left:789.6px;top:303.07px;font-size:9.9px;line-height:10px;transform:scaleX(0.93);transform-origin:0 0">Unanswered</div>
<div class="a" style="left:877.6px;top:303.07px;font-size:9.9px;line-height:10px;transform:scaleX(0.93);transform-origin:0 0">Unanswered</div>
<div class="a" style="left:949.6px;top:303.07px;font-size:9.9px;line-height:10px;transform:scaleX(0.93);transform-origin:0 0">Unanswered</div>
<div class="a" style="left:1081.6px;top:303.07px;font-size:9.9px;line-height:10px;transform:scaleX(0.93);transform-origin:0 0">12</div>
<div class="a" style="left:1169.6px;top:303.07px;font-size:9.9px;line-height:10px;transform:scaleX(0.93);transform-origin:0 0">04/09/2020</div>
<div class="a" style="left:1258.8px;top:303.07px;font-size:9.9px;line-height:10px;transform:scaleX(0.93);transform-origin:0 0">Univest Bank and</div>
<div class="a" style="left:1258.8px;top:313.07px;font-size:9.9px;line-height:10px;transform:scaleX(0.93);transform-origin:0 0">Trust Co.</div>
<div class="a" style="left:243px;top:324px;width:1107px;height:24px;background:#fff"></div>
<div class="a" style="left:243px;top:324px;width:1107px;height:0;border-top:1px dotted #d9d9d9"></div>
<svg class="a" style="left:247px;top:326px" width="12" height="12" viewBox="0 0 12 12"><polygon points="6,0.8 7.5,4.4 11.3,4.6 8.3,7 9.3,10.8 6,8.7 2.7,10.8 3.7,7 0.7,4.6 4.5,4.4" fill="#fff" stroke="#cbd5ee" stroke-width="1"/></svg>
<svg class="a" style="left:269px;top:326px" width="14" height="13" viewBox="0 0 14 13"><path d="M1.5 2 L6 2 L6.5 0.5 L12.5 0.5 L12.5 6.5 L9.5 6.5 L9.5 11.5 L8 11.5 L8 7.5 L1.5 7.5 Z" fill="#fff" stroke="#cbd3ec" stroke-width="0.95"/></svg>
<div class="a" style="left:290.6px;top:327.07px;font-size:9.9px;line-height:10px;transform:scaleX(0.93);transform-origin:0 0">93.</div>
<div class="a" style="left:317.6px;top:327.07px;font-size:9.9px;line-height:10px;transform:scaleX(0.93);transform-origin:0 0">149368</div>
<div class="a" style="left:401.6px;top:327.07px;font-size:9.9px;line-height:10px;transform:scaleX(0.93);transform-origin:0 0">PHILADELPHIA</div>
<div class="a" style="left:477.6px;top:327.07px;font-size:9.9px;line-height:10px;transform:scaleX(0.93);transform-origin:0 0">PA</div>
<div class="a" style="left:525.6px;top:327.07px;font-size:9.9px;line-height:10px;transform:scaleX(0.93);transform-origin:0 0">19134</div>
<div class="a" style="left:566.6px;top:327.07px;font-size:9.9px;line-height:10px;transform:scaleX(0.93);transform-origin:0 0">313110</div>
<div class="a" style="left:645.6px;top:327.07px;font-size:9.9px;line-height:10px;transform:scaleX(0.93);transform-origin:0 0">Subchapter S Corporation</div>
<div class="a" style="left:789.6px;top:327.07px;font-size:9.9px;line-height:10px;transform:scaleX(0.93);transform-origin:0 0">Unanswered</div>
<div class="a" style="left:877.6px;top:327.07px;font-size:9.9px;line-height:10px;transform:scaleX(0.93);transform-origin:0 0">Unanswered</div>
<div class="a" style="left:949.6px;top:327.07px;font-size:9.9px;line-height:10px;transform:scaleX(0.93);transform-origin:0 0">Unanswered</div>
<div class="a" style="left:1081.6px;top:327.07px;font-size:9.9px;line-height:10px;transform:scaleX(0.93);transform-origin:0 0">33</div>
<div class="a" style="left:1169.6px;top:327.07px;font-size:9.9px;line-height:10px;transform:scaleX(0.93);transform-origin:0 0">05/05/2020</div>
<div class="a" style="left:1258.8px;top:327.07px;font-size:9.9px;line-height:10px;transform:scaleX(0.93);transform-origin:0 0">Port Richmond</div>
<div class="a" style="left:1258.8px;top:337.07px;font-size:9.9px;line-height:10px;transform:scaleX(0.93);transform-origin:0 0">Savings</div>
<div class="a" style="left:243px;top:348px;width:1107px;height:34px;background:#f2f2f2"></div>
<div class="a" style="left:243px;top:348px;width:1107px;height:0;border-top:1px dotted #d9d9d9"></div>
<svg class="a" style="left:247px;top:350px" width="12" height="12" viewBox="0 0 12 12"><polygon points="6,0.8 7.5,4.4 11.3,4.6 8.3,7 9.3,10.8 6,8.7 2.7,10.8 3.7,7 0.7,4.6 4.5,4.4" fill="#fff" stroke="#cbd5ee" stroke-width="1"/></svg>
<svg class="a" style="left:269px;top:350px" width="14" height="13" viewBox="0 0 14 13"><path d="M1.5 2 L6 2 L6.5 0.5 L12.5 0.5 L12.5 6.5 L9.5 6.5 L9.5 11.5 L8 11.5 L8 7.5 L1.5 7.5 Z" fill="#fff" stroke="#cbd3ec" stroke-width="0.95"/></svg>
<div class="a" style="left:290.6px;top:351.07px;font-size:9.9px;line-height:10px;transform:scaleX(0.93);transform-origin:0 0">112.</div>
<div class="a" style="left:317.6px;top:351.07px;font-size:9.9px;line-height:10px;transform:scaleX(0.93);transform-origin:0 0">149202</div>
<div class="a" style="left:401.6px;top:351.07px;font-size:9.9px;line-height:10px;transform:scaleX(0.93);transform-origin:0 0">PHILADELPHIA</div>
<div class="a" style="left:477.6px;top:351.07px;font-size:9.9px;line-height:10px;transform:scaleX(0.93);transform-origin:0 0">PA</div>
<div class="a" style="left:525.6px;top:351.07px;font-size:9.9px;line-height:10px;transform:scaleX(0.93);transform-origin:0 0">19103</div>
<div class="a" style="left:566.6px;top:351.07px;font-size:9.9px;line-height:10px;transform:scaleX(0.93);transform-origin:0 0">624410</div>
<div class="a" style="left:645.6px;top:351.07px;font-size:9.9px;line-height:10px;transform:scaleX(0.93);transform-origin:0 0">Corporation</div>
<div class="a" style="left:789.6px;top:351.07px;font-size:9.9px;line-height:10px;transform:scaleX(0.93);transform-origin:0 0">Unanswered</div>
<div class="a" style="left:877.6px;top:351.07px;font-size:9.9px;line-height:10px;transform:scaleX(0.93);transform-origin:0 0">Female Owned</div>
<div class="a" style="left:949.6px;top:351.07px;font-size:9.9px;line-height:10px;transform:scaleX(0.93);transform-origin:0 0">Non-Veteran</div>
<div class="a" style="left:1081.6px;top:351.07px;font-size:9.9px;line-height:10px;transform:scaleX(0.93);transform-origin:0 0">19</div>
<div class="a" style="left:1169.6px;top:351.07px;font-size:9.9px;line-height:10px;transform:scaleX(0.93);transform-origin:0 0">04/15/2020</div>
<div class="a" style="left:1258.8px;top:351.07px;font-size:9.9px;line-height:10px;transform:scaleX(0.93);transform-origin:0 0">Manufacturers and</div>
<div class="a" style="left:1258.8px;top:361.07px;font-size:9.9px;line-height:10px;transform:scaleX(0.93);transform-origin:0 0">Traders Trust</div>
<div class="a" style="left:1258.8px;top:371.07px;font-size:9.9px;line-height:10px;transform:scaleX(0.93);transform-origin:0 0">Company</div>
<div class="a" style="left:243px;top:382px;width:1107px;height:24px;background:#fff"></div>
<div class="a" style="left:243px;top:382px;width:1107px;height:0;border-top:1px dotted #d9d9d9"></div>
<svg class="a" style="left:247px;top:384px" width="12" height="12" viewBox="0 0 12 12"><polygon points="6,0.8 7.5,4.4 11.3,4.6 8.3,7 9.3,10.8 6,8.7 2.7,10.8 3.7,7 0.7,4.6 4.5,4.4" fill="#fff" stroke="#cbd5ee" stroke-width="1"/></svg>
<svg class="a" style="left:269px;top:384px" width="14" height="13" viewBox="0 0 14 13"><path d="M1.5 2 L6 2 L6.5 0.5 L12.5 0.5 L12.5 6.5 L9.5 6.5 L9.5 11.5 L8 11.5 L8 7.5 L1.5 7.5 Z" fill="#fff" stroke="#cbd3ec" stroke-width="0.95"/></svg>
<div class="a" style="left:290.6px;top:385.07px;font-size:9.9px;line-height:10px;transform:scaleX(0.93);transform-origin:0 0">137.</div>
<div class="a" style="left:317.6px;top:385.07px;font-size:9.9px;line-height:10px;transform:scaleX(0.93);transform-origin:0 0">149092</div>
<div class="a" style="left:401.6px;top:385.07px;font-size:9.9px;line-height:10px;transform:scaleX(0.93);transform-origin:0 0">PHILADELPHIA</div>
<div class="a" style="left:477.6px;top:385.07px;font-size:9.9px;line-height:10px;transform:scaleX(0.93);transform-origin:0 0">PA</div>
<div class="a" style="left:525.6px;top:385.07px;font-size:9.9px;line-height:10px;transform:scaleX(0.93);transform-origin:0 0">19120</div>
<div class="a" style="left:566.6px;top:385.07px;font-size:9.9px;line-height:10px;transform:scaleX(0.93);transform-origin:0 0">524210</div>
<div class="a" style="left:645.6px;top:385.07px;font-size:9.9px;line-height:10px;transform:scaleX(0.93);transform-origin:0 0">Subchapter S Corporation</div>
<div class="a" style="left:789.6px;top:385.07px;font-size:9.9px;line-height:10px;transform:scaleX(0.93);transform-origin:0 0">Unanswered</div>
<div class="a" style="left:877.6px;top:385.07px;font-size:9.9px;line-height:10px;transform:scaleX(0.93);transform-origin:0 0">Unanswered</div>
<div class="a" style="left:949.6px;top:385.07px;font-size:9.9px;line-height:10px;transform:scaleX(0.93);transform-origin:0 0">Unanswered</div>
<div class="a" style="left:1081.6px;top:385.07px;font-size:9.9px;line-height:10px;transform:scaleX(0.93);transform-origin:0 0">9</div>
<div class="a" style="left:1169.6px;top:385.07px;font-size:9.9px;line-height:10px;transform:scaleX(0.93);transform-origin:0 0">04/16/2020</div>
<div class="a" style="left:1258.8px;top:385.07px;font-size:9.9px;line-height:10px;transform:scaleX(0.93);transform-origin:0 0">TD Bank, National</div>
<div class="a" style="left:1258.8px;top:395.07px;font-size:9.9px;line-height:10px;transform:scaleX(0.93);transform-origin:0 0">Association</div>
<div class="a" style="left:243px;top:406px;width:1107px;height:34px;background:#f2f2f2"></div>
<div class="a" style="left:243px;top:406px;width:1107px;height:0;border-top:1px dotted #d9d9d9"></div>
<svg class="a" style="left:247px;top:408px" width="12" height="12" viewBox="0 0 12 12"><polygon points="6,0.8 7.5,4.4 11.3,4.6 8.3,7 9.3,10.8 6,8.7 2.7,10.8 3.7,7 0.7,4.6 4.5,4.4" fill="#fff" stroke="#cbd5ee" stroke-width="1"/></svg>
<svg class="a" style="left:269px;top:408px" width="14" height="13" viewBox="0 0 14 13"><path d="M1.5 2 L6 2 L6.5 0.5 L12.5 0.5 L12.5 6.5 L9.5 6.5 L9.5 11.5 L8 11.5 L8 7.5 L1.5 7.5 Z" fill="#fff" stroke="#cbd3ec" stroke-width="0.95"/></svg>
<div class="a" style="left:290.6px;top:409.07px;font-size:9.9px;line-height:10px;transform:scaleX(0.93);transform-origin:0 0">160.</div>
<div class="a" style="left:317.6px;top:409.07px;font-size:9.9px;line-height:10px;transform:scaleX(0.93);transform-origin:0 0">148962</div>
<div class="a" style="left:401.6px;top:409.07px;font-size:9.9px;line-height:10px;transform:scaleX(0.93);transform-origin:0 0">PHILADELPHIA</div>
<div class="a" style="left:477.6px;top:409.07px;font-size:9.9px;line-height:10px;transform:scaleX(0.93);transform-origin:0 0">PA</div>
<div class="a" style="left:525.6px;top:409.07px;font-size:9.9px;line-height:10px;transform:scaleX(0.93);transform-origin:0 0">19107</div>
<div class="a" style="left:566.6px;top:409.07px;font-size:9.9px;line-height:10px;transform:scaleX(0.93);transform-origin:0 0">541714</div>
<div class="a" style="left:645.6px;top:409.07px;font-size:9.9px;line-height:10px;transform:scaleX(0.93);transform-origin:0 0">Corporation</div>
<div class="a" style="left:789.6px;top:409.07px;font-size:9.9px;line-height:10px;transform:scaleX(0.93);transform-origin:0 0">Unanswered</div>
<div class="a" style="left:877.6px;top:409.07px;font-size:9.9px;line-height:10px;transform:scaleX(0.93);transform-origin:0 0">Unanswered</div>
<div class="a" style="left:949.6px;top:409.07px;font-size:9.9px;line-height:10px;transform:scaleX(0.93);transform-origin:0 0">Unanswered</div>
<div class="a" style="left:1081.6px;top:409.07px;font-size:9.9px;line-height:10px;transform:scaleX(0.93);transform-origin:0 0">8</div>
<div class="a" style="left:1169.6px;top:409.07px;font-size:9.9px;line-height:10px;transform:scaleX(0.93);transform-origin:0 0">04/10/2020</div>
<div class="a" style="left:1258.8px;top:409.07px;font-size:9.9px;line-height:10px;transform:scaleX(0.93);transform-origin:0 0">JPMorgan Chase</div>
<div class="a" style="left:1258.8px;top:419.07px;font-size:9.9px;line-height:10px;transform:scaleX(0.93);transform-origin:0 0">Bank, National</div>
<div class="a" style="left:1258.8px;top:429.07px;font-size:9.9px;line-height:10px;transform:scaleX(0.93);transform-origin:0 0">Association</div>
<div class="a" style="left:243px;top:440px;width:1107px;height:24px;background:#fff"></div>
<div class="a" style="left:243px;top:440px;width:1107px;height:0;border-top:1px dotted #d9d9d9"></div>
<svg class="a" style="left:247px;top:442px" width="12" height="12" viewBox="0 0 12 12"><polygon points="6,0.8 7.5,4.4 11.3,4.6 8.3,7 9.3,10.8 6,8.7 2.7,10.8 3.7,7 0.7,4.6 4.5,4.4" fill="#fff" stroke="#cbd5ee" stroke-width="1"/></svg>
<svg class="a" style="left:269px;top:442px" width="14" height="13" viewBox="0 0 14 13"><path d="M1.5 2 L6 2 L6.5 0.5 L12.5 0.5 L12.5 6.5 L9.5 6.5 L9.5 11.5 L8 11.5 L8 7.5 L1.5 7.5 Z" fill="#fff" stroke="#cbd3ec" stroke-width="0.95"/></svg>
<div class="a" style="left:290.6px;top:443.07px;font-size:9.9px;line-height:10px;transform:scaleX(0.93);transform-origin:0 0">163.</div>
<div class="a" style="left:317.6px;top:443.07px;font-size:9.9px;line-height:10px;transform:scaleX(0.93);transform-origin:0 0">148955</div>
<div class="a" style="left:401.6px;top:443.07px;font-size:9.9px;line-height:10px;transform:scaleX(0.93);transform-origin:0 0">PHOENIXVILLE</div>
<div class="a" style="left:477.6px;top:443.07px;font-size:9.9px;line-height:10px;transform:scaleX(0.93);transform-origin:0 0">PA</div>
<div class="a" style="left:525.6px;top:443.07px;font-size:9.9px;line-height:10px;transform:scaleX(0.93);transform-origin:0 0">19460</div>
<div class="a" style="left:566.6px;top:443.07px;font-size:9.9px;line-height:10px;transform:scaleX(0.93);transform-origin:0 0">238990</div>
<div class="a" style="left:645.6px;top:443.07px;font-size:9.9px;line-height:10px;transform:scaleX(0.93);transform-origin:0 0">Subchapter S Corporation</div>
<div class="a" style="left:789.6px;top:443.07px;font-size:9.9px;line-height:10px;transform:scaleX(0.93);transform-origin:0 0">Unanswered</div>
<div class="a" style="left:877.6px;top:443.07px;font-size:9.9px;line-height:10px;transform:scaleX(0.93);transform-origin:0 0">Unanswered</div>
<div class="a" style="left:949.6px;top:443.07px;font-size:9.9px;line-height:10px;transform:scaleX(0.93);transform-origin:0 0">Unanswered</div>
<div class="a" style="left:1081.6px;top:443.07px;font-size:9.9px;line-height:10px;transform:scaleX(0.93);transform-origin:0 0">10</div>
<div class="a" style="left:1169.6px;top:443.07px;font-size:9.9px;line-height:10px;transform:scaleX(0.93);transform-origin:0 0">06/09/2020</div>
<div class="a" style="left:1258.8px;top:443.07px;font-size:9.9px;line-height:10px;transform:scaleX(0.93);transform-origin:0 0">Intuit Financing</div>
<div class="a" style="left:1258.8px;top:453.07px;font-size:9.9px;line-height:10px;transform:scaleX(0.93);transform-origin:0 0">Inc.</div>
<div class="a" style="left:243px;top:464px;width:1107px;height:34px;background:#f2f2f2"></div>
<div class="a" style="left:243px;top:464px;width:1107px;height:0;border-top:1px dotted #d9d9d9"></div>
<svg class="a" style="left:247px;top:466px" width="12" height="12" viewBox="0 0 12 12"><polygon points="6,0.8 7.5,4.4 11.3,4.6 8.3,7 9.3,10.8 6,8.7 2.7,10.8 3.7,7 0.7,4.6 4.5,4.4" fill="#fff" stroke="#cbd5ee" stroke-width="1"/></svg>
<svg class="a" style="left:269px;top:466px" width="14" height="13" viewBox="0 0 14 13"><path d="M1.5 2 L6 2 L6.5 0.5 L12.5 0.5 L12.5 6.5 L9.5 6.5 L9.5 11.5 L8 11.5 L8 7.5 L1.5 7.5 Z" fill="#fff" stroke="#cbd3ec" stroke-width="0.95"/></svg>
<div class="a" style="left:290.6px;top:467.07px;font-size:9.9px;line-height:10px;transform:scaleX(0.93);transform-origin:0 0">180.</div>
<div class="a" style="left:317.6px;top:467.07px;font-size:9.9px;line-height:10px;transform:scaleX(0.93);transform-origin:0 0">148841</div>
<div class="a" style="left:401.6px;top:467.07px;font-size:9.9px;line-height:10px;transform:scaleX(0.93);transform-origin:0 0">PHOENIXVILLE</div>
<div class="a" style="left:477.6px;top:467.07px;font-size:9.9px;line-height:10px;transform:scaleX(0.93);transform-origin:0 0">PA</div>
<div class="a" style="left:525.6px;top:467.07px;font-size:9.9px;line-height:10px;transform:scaleX(0.93);transform-origin:0 0">19460</div>
<div class="a" style="left:566.6px;top:467.07px;font-size:9.9px;line-height:10px;transform:scaleX(0.93);transform-origin:0 0">621610</div>
<div class="a" style="left:645.6px;top:467.07px;font-size:9.9px;line-height:10px;transform:scaleX(0.93);transform-origin:0 0">Non-Profit Organization</div>
<div class="a" style="left:789.6px;top:467.07px;font-size:9.9px;line-height:10px;transform:scaleX(0.93);transform-origin:0 0">Unanswered</div>
<div class="a" style="left:877.6px;top:467.07px;font-size:9.9px;line-height:10px;transform:scaleX(0.93);transform-origin:0 0">Unanswered</div>
<div class="a" style="left:949.6px;top:467.07px;font-size:9.9px;line-height:10px;transform:scaleX(0.93);transform-origin:0 0">Unanswered</div>
<div class="a" style="left:1010.6px;top:467.07px;font-size:9.9px;line-height:10px;transform:scaleX(0.93);transform-origin:0 0">Y</div>
<div class="a" style="left:1081.6px;top:467.07px;font-size:9.9px;line-height:10px;transform:scaleX(0.93);transform-origin:0 0">0</div>
<div class="a" style="left:1169.6px;top:467.07px;font-size:9.9px;line-height:10px;transform:scaleX(0.93);transform-origin:0 0">04/15/2020</div>
<div class="a" style="left:1258.8px;top:467.07px;font-size:9.9px;line-height:10px;transform:scaleX(0.93);transform-origin:0 0">Phoenixville</div>
<div class="a" style="left:1258.8px;top:477.07px;font-size:9.9px;line-height:10px;transform:scaleX(0.93);transform-origin:0 0">Federal Bank and</div>
<div class="a" style="left:1258.8px;top:487.07px;font-size:9.9px;line-height:10px;transform:scaleX(0.93);transform-origin:0 0">Trust</div>
<div class="a" style="left:243px;top:498px;width:1107px;height:24px;background:#fff"></div>
<div class="a" style="left:243px;top:498px;width:1107px;height:0;border-top:1px dotted #d9d9d9"></div>
<svg class="a" style="left:247px;top:500px" width="12" height="12" viewBox="0 0 12 12"><polygon points="6,0.8 7.5,4.4 11.3,4.6 8.3,7 9.3,10.8 6,8.7 2.7,10.8 3.7,7 0.7,4.6 4.5,4.4" fill="#fff" stroke="#cbd5ee" stroke-width="1"/></svg>
<svg class="a" style="left:269px;top:500px" width="14" height="13" viewBox="0 0 14 13"><path d="M1.5 2 L6 2 L6.5 0.5 L12.5 0.5 L12.5 6.5 L9.5 6.5 L9.5 11.5 L8 11.5 L8 7.5 L1.5 7.5 Z" fill="#fff" stroke="#cbd3ec" stroke-width="0.95"/></svg>
<div class="a" style="left:290.6px;top:501.07px;font-size:9.9px;line-height:10px;transform:scaleX(0.93);transform-origin:0 0">183.</div>
<div class="a" style="left:317.6px;top:501.07px;font-size:9.9px;line-height:10px;transform:scaleX(0.93);transform-origin:0 0">148805.12</div>
<div class="a" style="left:401.6px;top:501.07px;font-size:9.9px;line-height:10px;transform:scaleX(0.93);transform-origin:0 0">PHILADELPHIA</div>
<div class="a" style="left:477.6px;top:501.07px;font-size:9.9px;line-height:10px;transform:scaleX(0.93);transform-origin:0 0">PA</div>
<div class="a" style="left:525.6px;top:501.07px;font-size:9.9px;line-height:10px;transform:scaleX(0.93);transform-origin:0 0">19153</div>
<div class="a" style="left:566.6px;top:501.07px;font-size:9.9px;line-height:10px;transform:scaleX(0.93);transform-origin:0 0">424480</div>
<div class="a" style="left:645.6px;top:501.07px;font-size:9.9px;line-height:10px;transform:scaleX(0.93);transform-origin:0 0">Subchapter S Corporation</div>
<div class="a" style="left:789.6px;top:501.07px;font-size:9.9px;line-height:10px;transform:scaleX(0.93);transform-origin:0 0">Unanswered</div>
<div class="a" style="left:877.6px;top:501.07px;font-size:9.9px;line-height:10px;transform:scaleX(0.93);transform-origin:0 0">Unanswered</div>
<div class="a" style="left:949.6px;top:501.07px;font-size:9.9px;line-height:10px;transform:scaleX(0.93);transform-origin:0 0">Unanswered</div>
<div class="a" style="left:1081.6px;top:501.07px;font-size:9.9px;line-height:10px;transform:scaleX(0.93);transform-origin:0 0">15</div>
<div class="a" style="left:1169.6px;top:501.07px;font-size:9.9px;line-height:10px;transform:scaleX(0.93);transform-origin:0 0">04/27/2020</div>
<div class="a" style="left:1258.8px;top:501.07px;font-size:9.9px;line-height:10px;transform:scaleX(0.93);transform-origin:0 0">United Savings</div>
<div class="a" style="left:1258.8px;top:511.07px;font-size:9.9px;line-height:10px;transform:scaleX(0.93);transform-origin:0 0">Bank</div>
<div class="a" style="left:243px;top:522px;width:1107px;height:34px;background:#f2f2f2"></div>
<div class="a" style="left:243px;top:522px;width:1107px;height:0;border-top:1px dotted #d9d9d9"></div>
<svg class="a" style="left:247px;top:524px" width="12" height="12" viewBox="0 0 12 12"><polygon points="6,0.8 7.5,4.4 11.3,4.6 8.3,7 9.3,10.8 6,8.7 2.7,10.8 3.7,7 0.7,4.6 4.5,4.4" fill="#fff" stroke="#cbd5ee" stroke-width="1"/></svg>
<svg class="a" style="left:269px;top:524px" width="14" height="13" viewBox="0 0 14 13"><path d="M1.5 2 L6 2 L6.5 0.5 L12.5 0.5 L12.5 6.5 L9.5 6.5 L9.5 11.5 L8 11.5 L8 7.5 L1.5 7.5 Z" fill="#fff" stroke="#cbd3ec" stroke-width="0.95"/></svg>
<div class="a" style="left:290.6px;top:525.07px;font-size:9.9px;line-height:10px;transform:scaleX(0.93);transform-origin:0 0">216.</div>
<div class="a" style="left:317.6px;top:525.07px;font-size:9.9px;line-height:10px;transform:scaleX(0.93);transform-origin:0 0">148600</div>
<div class="a" style="left:401.6px;top:525.07px;font-size:9.9px;line-height:10px;transform:scaleX(0.93);transform-origin:0 0">PHILADELPHIA</div>
<div class="a" style="left:477.6px;top:525.07px;font-size:9.9px;line-height:10px;transform:scaleX(0.93);transform-origin:0 0">PA</div>
<div class="a" style="left:525.6px;top:525.07px;font-size:9.9px;line-height:10px;transform:scaleX(0.93);transform-origin:0 0">19116</div>
<div class="a" style="left:566.6px;top:525.07px;font-size:9.9px;line-height:10px;transform:scaleX(0.93);transform-origin:0 0">621111</div>
<div class="a" style="left:645.6px;top:525.07px;font-size:9.9px;line-height:10px;transform:scaleX(0.93);transform-origin:0 0">Limited&nbsp; Liability&nbsp; Company(LLC)</div>
<div class="a" style="left:789.6px;top:525.07px;font-size:9.9px;line-height:10px;transform:scaleX(0.93);transform-origin:0 0">Unanswered</div>
<div class="a" style="left:877.6px;top:525.07px;font-size:9.9px;line-height:10px;transform:scaleX(0.93);transform-origin:0 0">Unanswered</div>
<div class="a" style="left:949.6px;top:525.07px;font-size:9.9px;line-height:10px;transform:scaleX(0.93);transform-origin:0 0">Unanswered</div>
<div class="a" style="left:1169.6px;top:525.07px;font-size:9.9px;line-height:10px;transform:scaleX(0.93);transform-origin:0 0">04/30/2020</div>
<div class="a" style="left:1258.8px;top:525.07px;font-size:9.9px;line-height:10px;transform:scaleX(0.93);transform-origin:0 0">Citizens Bank,</div>
<div class="a" style="left:1258.8px;top:535.07px;font-size:9.9px;line-height:10px;transform:scaleX(0.93);transform-origin:0 0">National</div>
<div class="a" style="left:1258.8px;top:545.07px;font-size:9.9px;line-height:10px;transform:scaleX(0.93);transform-origin:0 0">Association</div>
<div class="a" style="left:243px;top:556px;width:1107px;height:24px;background:#fff"></div>
<div class="a" style="left:243px;top:556px;width:1107px;height:0;border-top:1px dotted #d9d9d9"></div>
<svg class="a" style="left:247px;top:558px" width="12" height="12" viewBox="0 0 12 12"><polygon points="6,0.8 7.5,4.4 11.3,4.6 8.3,7 9.3,10.8 6,8.7 2.7,10.8 3.7,7 0.7,4.6 4.5,4.4" fill="#fff" stroke="#cbd5ee" stroke-width="1"/></svg>
<svg class="a" style="left:269px;top:558px" width="14" height="13" viewBox="0 0 14 13"><path d="M1.5 2 L6 2 L6.5 0.5 L12.5 0.5 L12.5 6.5 L9.5 6.5 L9.5 11.5 L8 11.5 L8 7.5 L1.5 7.5 Z" fill="#fff" stroke="#cbd3ec" stroke-width="0.95"/></svg>
<div class="a" style="left:290.6px;top:559.07px;font-size:9.9px;line-height:10px;transform:scaleX(0.93);transform-origin:0 0">217.</div>
<div class="a" style="left:317.6px;top:559.07px;font-size:9.9px;line-height:10px;transform:scaleX(0.93);transform-origin:0 0">148600</div>
<div class="a" style="left:401.6px;top:559.07px;font-size:9.9px;line-height:10px;transform:scaleX(0.93);transform-origin:0 0">PHILADELPHIA</div>
<div class="a" style="left:477.6px;top:559.07px;font-size:9.9px;line-height:10px;transform:scaleX(0.93);transform-origin:0 0">PA</div>
<div class="a" style="left:525.6px;top:559.07px;font-size:9.9px;line-height:10px;transform:scaleX(0.93);transform-origin:0 0">19119</div>
<div class="a" style="left:566.6px;top:559.07px;font-size:9.9px;line-height:10px;transform:scaleX(0.93);transform-origin:0 0">812990</div>
<div class="a" style="left:645.6px;top:559.07px;font-size:9.9px;line-height:10px;transform:scaleX(0.93);transform-origin:0 0">Corporation</div>
<div class="a" style="left:789.6px;top:559.07px;font-size:9.9px;line-height:10px;transform:scaleX(0.93);transform-origin:0 0">Unanswered</div>
<div class="a" style="left:877.6px;top:559.07px;font-size:9.9px;line-height:10px;transform:scaleX(0.93);transform-origin:0 0">Unanswered</div>
<div class="a" style="left:949.6px;top:559.07px;font-size:9.9px;line-height:10px;transform:scaleX(0.93);transform-origin:0 0">Unanswered</div>
<div class="a" style="left:1081.6px;top:559.07px;font-size:9.9px;line-height:10px;transform:scaleX(0.93);transform-origin:0 0">16</div>
<div class="a" style="left:1169.6px;top:559.07px;font-size:9.9px;line-height:10px;transform:scaleX(0.93);transform-origin:0 0">04/28/2020</div>
<div class="a" style="left:1258.8px;top:559.07px;font-size:9.9px;line-height:10px;transform:scaleX(0.93);transform-origin:0 0">Univest Bank and</div>
<div class="a" style="left:1258.8px;top:569.07px;font-size:9.9px;line-height:10px;transform:scaleX(0.93);transform-origin:0 0">Trust Co.</div>
<div class="a" style="left:243px;top:580px;width:1107px;height:34px;background:#f2f2f2"></div>
<div class="a" style="left:243px;top:580px;width:1107px;height:0;border-top:1px dotted #d9d9d9"></div>
<svg class="a" style="left:247px;top:582px" width="12" height="12" viewBox="0 0 12 12"><polygon points="6,0.8 7.5,4.4 11.3,4.6 8.3,7 9.3,10.8 6,8.7 2.7,10.8 3.7,7 0.7,4.6 4.5,4.4" fill="#fff" stroke="#cbd5ee" stroke-width="1"/></svg>
<svg class="a" style="left:269px;top:582px" width="14" height="13" viewBox="0 0 14 13"><path d="M1.5 2 L6 2 L6.5 0.5 L12.5 0.5 L12.5 6.5 L9.5 6.5 L9.5 11.5 L8 11.5 L8 7.5 L1.5 7.5 Z" fill="#fff" stroke="#cbd3ec" stroke-width="0.95"/></svg>
<div class="a" style="left:290.6px;top:583.07px;font-size:9.9px;line-height:10px;transform:scaleX(0.93);transform-origin:0 0">220.</div>
<div class="a" style="left:317.6px;top:583.07px;font-size:9.9px;line-height:10px;transform:scaleX(0.93);transform-origin:0 0">148555</div>
<div class="a" style="left:401.6px;top:583.07px;font-size:9.9px;line-height:10px;transform:scaleX(0.93);transform-origin:0 0">PHILADELPHIA</div>
<div class="a" style="left:477.6px;top:583.07px;font-size:9.9px;line-height:10px;transform:scaleX(0.93);transform-origin:0 0">PA</div>
<div class="a" style="left:525.6px;top:583.07px;font-size:9.9px;line-height:10px;transform:scaleX(0.93);transform-origin:0 0">19124</div>
<div class="a" style="left:566.6px;top:583.07px;font-size:9.9px;line-height:10px;transform:scaleX(0.93);transform-origin:0 0">561499</div>
<div class="a" style="left:645.6px;top:583.07px;font-size:9.9px;line-height:10px;transform:scaleX(0.93);transform-origin:0 0">Corporation</div>
<div class="a" style="left:789.6px;top:583.07px;font-size:9.9px;line-height:10px;transform:scaleX(0.93);transform-origin:0 0">Unanswered</div>
<div class="a" style="left:877.6px;top:583.07px;font-size:9.9px;line-height:10px;transform:scaleX(0.93);transform-origin:0 0">Unanswered</div>
<div class="a" style="left:949.6px;top:583.07px;font-size:9.9px;line-height:10px;transform:scaleX(0.93);transform-origin:0 0">Unanswered</div>
<div class="a" style="left:1081.6px;top:583.07px;font-size:9.9px;line-height:10px;transform:scaleX(0.93);transform-origin:0 0">57</div>
<div class="a" style="left:1169.6px;top:583.07px;font-size:9.9px;line-height:10px;transform:scaleX(0.93);transform-origin:0 0">04/14/2020</div>
<div class="a" style="left:1258.8px;top:583.07px;font-size:9.9px;line-height:10px;transform:scaleX(0.93);transform-origin:0 0">Manufacturers and</div>
<div class="a" style="left:1258.8px;top:593.07px;font-size:9.9px;line-height:10px;transform:scaleX(0.93);transform-origin:0 0">Traders Trust</div>
<div class="a" style="left:1258.8px;top:603.07px;font-size:9.9px;line-height:10px;transform:scaleX(0.93);transform-origin:0 0">Company</div>
<div class="a" style="left:243px;top:614px;width:1107px;height:5px;background:#fff;border-top:1px dotted #d9d9d9"></div>
<div class="vl" style="left:264px;top:102px;height:513px"></div>
<div class="vl" style="left:286px;top:102px;height:513px"></div>
<div class="vl" style="left:313px;top:102px;height:513px"></div>
<div class="vl" style="left:397px;top:102px;height:513px"></div>
<div class="vl" style="left:473px;top:102px;height:513px"></div>
<div class="vl" style="left:521px;top:102px;height:513px"></div>
<div class="vl" style="left:562px;top:102px;height:513px"></div>
<div class="vl" style="left:641px;top:102px;height:513px"></div>
<div class="vl" style="left:785px;top:102px;height:513px"></div>
<div class="vl" style="left:873px;top:102px;height:513px"></div>
<div class="vl" style="left:945px;top:102px;height:513px"></div>
<div class="vl" style="left:1006px;top:102px;height:513px"></div>
<div class="vl" style="left:1077px;top:102px;height:513px"></div>
<div class="vl" style="left:1165px;top:102px;height:513px"></div>
<div class="vl" style="left:1254px;top:102px;height:513px"></div>
<div class="vl" style="left:1342px;top:102px;height:513px"></div>
<div class="a" style="left:1350px;top:102px;width:8px;height:513px;background:#f1f1f1"></div>
<div class="a" style="left:1350px;top:120px;width:8px;height:184px;background:#c1c1c1"></div>
<div class="a" style="left:1352.5px;top:110px;border-left:4px solid transparent;border-right:4px solid transparent;border-bottom:4px solid #a3a3a3"></div>
<div class="a" style="left:1352.5px;top:607px;border-left:4px solid transparent;border-right:4px solid transparent;border-top:4px solid #505050"></div>
<div class="a" style="left:1116px;top:24px;width:204px;height:292px;background:#fff;border:1px solid #8a8a8a;border-top-color:#b8b8b8;border-right-color:#5a5a5a;border-bottom-color:#5a5a5a"></div>
<div class="a" style="left:1117px;top:136px;width:201px;height:21px;background:#dce6f5"></div>
<div class="a" style="left:1118px;top:49px;width:200px;height:1px;background:#cacaca"></div>
<div class="a" style="left:1118px;top:180px;width:200px;height:1px;background:#cacaca"></div>
<div class="a" style="left:1118px;top:248px;width:200px;height:1px;background:#cacaca"></div>
<div class="a" style="left:1124.6px;top:29.67px;font-size:9.9px;line-height:13px;letter-spacing:0.25px">Export project</div>
<div class="a" style="left:1124.6px;top:55.67px;font-size:9.9px;line-height:13px;letter-spacing:0.25px">Tab-separated value</div>
<div class="a" style="left:1124.6px;top:76.87px;font-size:9.9px;line-height:13px;letter-spacing:0.25px">Comma-separated value</div>
<div class="a" style="left:1124.6px;top:97.77px;font-size:9.9px;line-height:13px;letter-spacing:0.25px">HTML table</div>
<div class="a" style="left:1124.6px;top:118.67px;font-size:9.9px;line-height:13px;letter-spacing:0.25px">Excel (.xls)</div>
<div class="a" style="left:1124.6px;top:139.67px;font-size:9.9px;line-height:13px;letter-spacing:0.25px">Excel 2007+ (.xlsx)</div>
<div class="a" style="left:1124.6px;top:160.27px;font-size:9.9px;line-height:13px;letter-spacing:0.25px">ODF spreadsheet</div>
<div class="a" style="left:1124.6px;top:186.47px;font-size:9.9px;line-height:13px;letter-spacing:0.25px">Custom tabular exporter...</div>
<div class="a" style="left:1124.6px;top:207.77px;font-size:9.9px;line-height:13px;letter-spacing:0.25px">SQL Exporter...</div>
<div class="a" style="left:1124.6px;top:227.97px;font-size:9.9px;line-height:13px;letter-spacing:0.25px">Templating...</div>
<div class="a" style="left:1124.6px;top:254.17px;font-size:9.9px;line-height:13px;letter-spacing:0.25px">Upload edits to Wikidata</div>
<div class="a" style="left:1124.6px;top:274.97px;font-size:9.9px;line-height:13px;letter-spacing:0.25px">Export to QuickStatements</div>
<div class="a" style="left:1124.6px;top:295.67px;font-size:9.9px;line-height:13px;letter-spacing:0.25px">Export Wikidata schema</div>
</body></html>
